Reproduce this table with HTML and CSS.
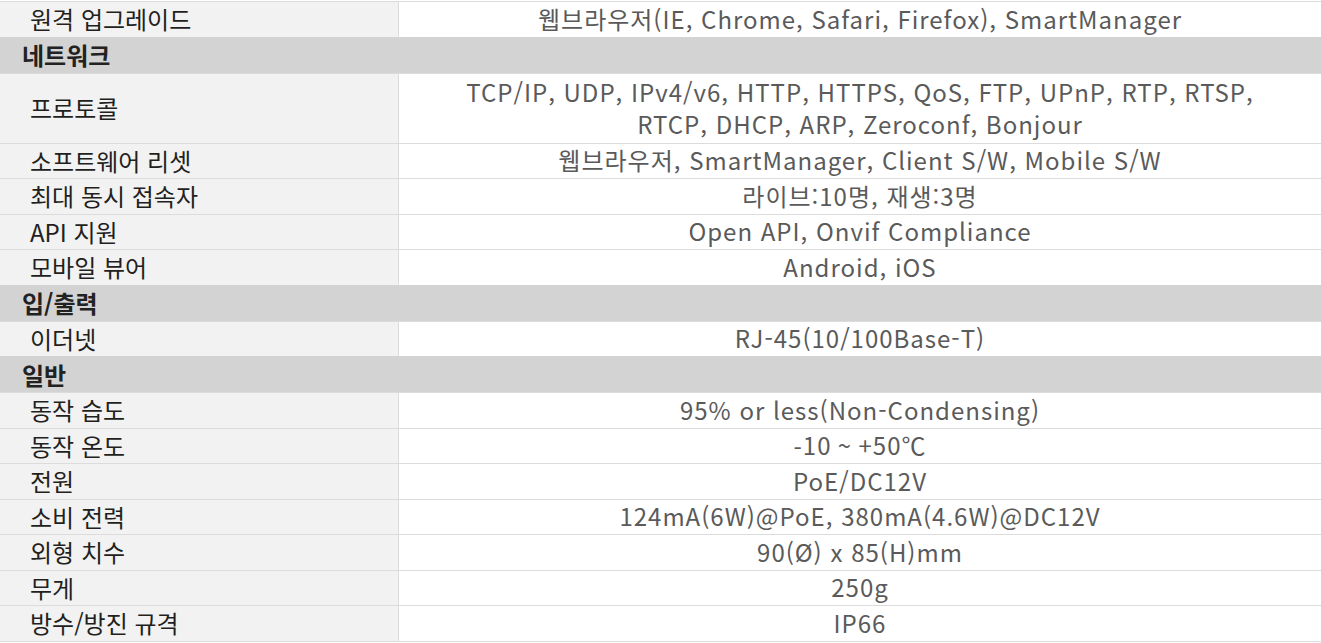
FILE: index.html
```html
<!DOCTYPE html>
<html lang="ko">
<head>
<meta charset="utf-8">
<link rel="stylesheet" href="styles.css">
</head>
<body>
<div class="spec">
  <div class="row"><div class="label">원격 업그레이드</div><div class="value">웹브라우저(IE, Chrome, Safari, Firefox), SmartManager</div></div>
  <div class="section">네트워크</div>
  <div class="row tall"><div class="label">프로토콜</div><div class="value">TCP/IP, UDP, IPv4/v6, HTTP, HTTPS, QoS, FTP, UPnP, RTP, RTSP,<br>RTCP, DHCP, ARP, Zeroconf, Bonjour</div></div>
  <div class="row"><div class="label">소프트웨어 리셋</div><div class="value">웹브라우저, SmartManager, Client S/W, Mobile S/W</div></div>
  <div class="row"><div class="label">최대 동시 접속자</div><div class="value">라이브:10명, 재생:3명</div></div>
  <div class="row"><div class="label">API 지원</div><div class="value">Open API, Onvif Compliance</div></div>
  <div class="row"><div class="label">모바일 뷰어</div><div class="value">Android, iOS</div></div>
  <div class="section">입/출력</div>
  <div class="row"><div class="label">이더넷</div><div class="value">RJ-45(10/100Base-T)</div></div>
  <div class="section">일반</div>
  <div class="row"><div class="label">동작 습도</div><div class="value">95% or less(Non-Condensing)</div></div>
  <div class="row"><div class="label">동작 온도</div><div class="value">-10 ~ +50℃</div></div>
  <div class="row"><div class="label">전원</div><div class="value">PoE/DC12V</div></div>
  <div class="row"><div class="label">소비 전력</div><div class="value">124mA(6W)@PoE, 380mA(4.6W)@DC12V</div></div>
  <div class="row"><div class="label">외형 치수</div><div class="value">90(Ø) x 85(H)mm</div></div>
  <div class="row"><div class="label">무게</div><div class="value">250g</div></div>
  <div class="row"><div class="label">방수/방진 규격</div><div class="value">IP66</div></div>
</div>
</body>
</html>
```
FILE: styles.css
```css
html, body {
  margin: 0;
  padding: 0;
  background: #ffffff;
}
.spec {
  padding-top: 1px;
  font-family: "Noto Sans CJK KR", "Noto Sans", sans-serif;
  font-size: 24px;
}
.row {
  display: grid;
  grid-template-columns: 399px 1fr;
  border-top: 1px solid #dcdcdc;
  height: 34.5px;
}
.row.tall {
  height: 69px;
}
.label {
  background: #f2f2f2;
  border-right: 1px solid #dcdcdc;
  color: #231f20;
  padding-left: 30px;
  display: flex;
  align-items: center;
  line-height: 32px;
}
.value {
  color: #5a5a5a;
  text-align: center;
  display: flex;
  align-items: center;
  justify-content: center;
  line-height: 32px;
  letter-spacing: 1px;
  padding-bottom: 1px;
}
.section {
  background: #d3d3d3;
  color: #222222;
  font-weight: bold;
  padding-left: 22px;
  height: 36px;
  display: flex;
  align-items: center;
}
.spec > .row:last-child {
  border-bottom: 1px solid #dcdcdc;
}
```
